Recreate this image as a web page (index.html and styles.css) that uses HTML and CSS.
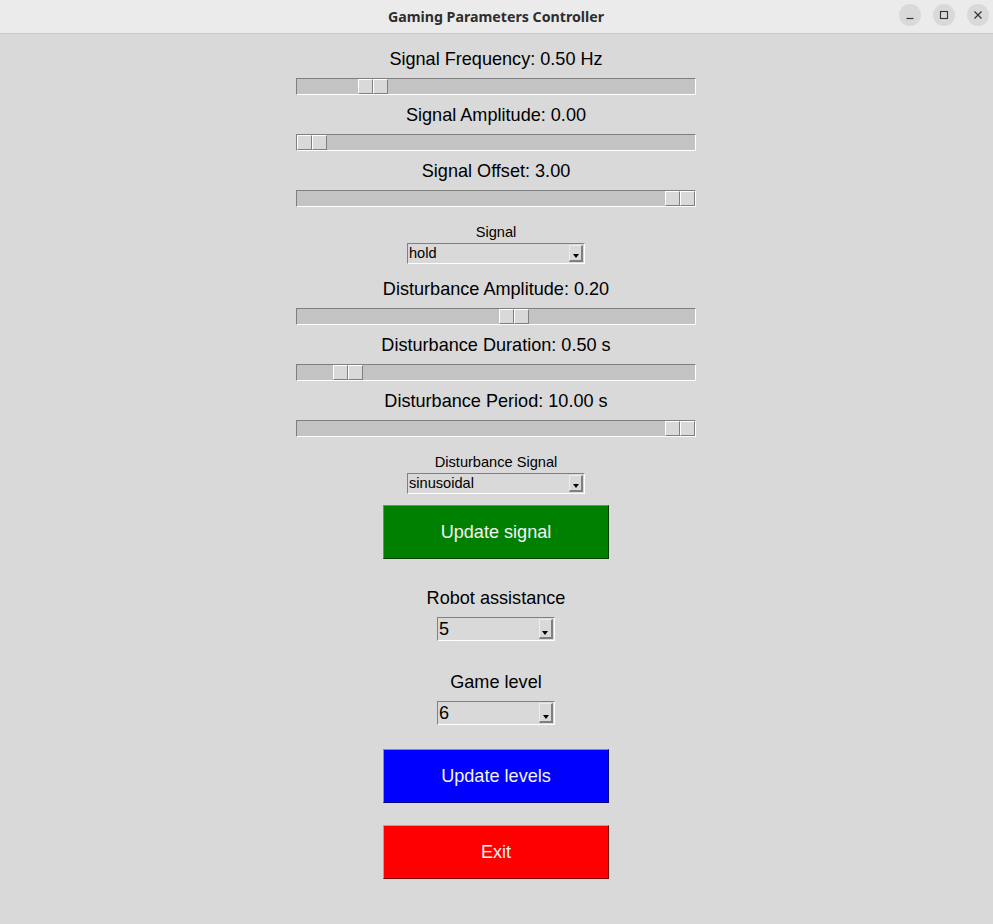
FILE: index.html
```html
<!DOCTYPE html>
<html>
<head>
<meta charset="utf-8">
<title>Gaming Parameters Controller</title>
<link rel="stylesheet" href="styles.css">
</head>
<body>
<div class="window">
  <header class="titlebar">
    <div class="title">Gaming Parameters Controller</div>
    <div class="controls">
      <span class="ctl"><svg width="10" height="10" viewBox="0 0 10 10"><path d="M1.5 8.5h7" stroke="#333" stroke-width="1.2"/></svg></span>
      <span class="ctl"><svg width="10" height="10" viewBox="0 0 10 10"><rect x="1.5" y="1.5" width="7" height="7" fill="none" stroke="#333" stroke-width="1.1"/></svg></span>
      <span class="ctl"><svg width="10" height="10" viewBox="0 0 10 10"><path d="M1.5 1.5l7 7M8.5 1.5l-7 7" stroke="#333" stroke-width="1.2"/></svg></span>
    </div>
  </header>
  <main class="content">
    <div class="scale-block">
      <div class="big-label">Signal Frequency: 0.50 Hz</div>
      <div class="scale"><div class="handle" style="margin-left:61px"><span></span><span></span></div></div>
    </div>
    <div class="scale-block">
      <div class="big-label">Signal Amplitude: 0.00</div>
      <div class="scale"><div class="handle" style="margin-left:0px"><span></span><span></span></div></div>
    </div>
    <div class="scale-block">
      <div class="big-label">Signal Offset: 3.00</div>
      <div class="scale"><div class="handle" style="margin-left:368px"><span></span><span></span></div></div>
    </div>
    <div class="combo-block small">
      <div class="small-label">Signal</div>
      <div class="combo small-combo"><span class="val">hold</span><span class="arrow"><i></i></span></div>
    </div>
    <div class="scale-block after-combo">
      <div class="big-label">Disturbance Amplitude: 0.20</div>
      <div class="scale"><div class="handle" style="margin-left:202px"><span></span><span></span></div></div>
    </div>
    <div class="scale-block">
      <div class="big-label">Disturbance Duration: 0.50 s</div>
      <div class="scale"><div class="handle" style="margin-left:36px"><span></span><span></span></div></div>
    </div>
    <div class="scale-block">
      <div class="big-label">Disturbance Period: 10.00 s</div>
      <div class="scale"><div class="handle" style="margin-left:368px"><span></span><span></span></div></div>
    </div>
    <div class="combo-block small">
      <div class="small-label">Disturbance Signal</div>
      <div class="combo small-combo"><span class="val">sinusoidal</span><span class="arrow"><i></i></span></div>
    </div>
    <button class="btn btn-green">Update signal</button>
    <div class="combo-block big first-big">
      <div class="big-label">Robot assistance</div>
      <div class="combo big-combo"><span class="val">5</span><span class="arrow"><i></i></span></div>
    </div>
    <div class="combo-block big second-big">
      <div class="big-label">Game level</div>
      <div class="combo big-combo"><span class="val">6</span><span class="arrow"><i></i></span></div>
    </div>
    <button class="btn btn-blue">Update levels</button>
    <button class="btn btn-red">Exit</button>
  </main>
</div>
</body>
</html>
```

FILE: styles.css
```css
* { box-sizing: border-box; }
html, body {
  margin: 0;
  padding: 0;
  width: 993px;
  height: 924px;
  overflow: hidden;
  background: #d9d9d9;
  font-family: "Liberation Sans", Arial, sans-serif;
  color: #000;
}
.window {
  width: 993px;
  height: 924px;
  display: flex;
  flex-direction: column;
}
.titlebar {
  height: 34px;
  background: #ebebeb;
  border-bottom: 1px solid #c9c9c9;
  position: relative;
  display: flex;
  align-items: center;
  justify-content: center;
  flex: none;
}
.title {
  font-family: "Noto Sans", "DejaVu Sans", sans-serif;
  font-weight: 700;
  font-size: 14.2px;
  color: #2e2e2e;
  margin-top: -1px;
  margin-left: -1px;
}
.controls {
  position: absolute;
  right: 4px;
  top: 4px;
  display: flex;
  gap: 12px;
}
.ctl {
  width: 22px;
  height: 22px;
  border-radius: 50%;
  background: #d9d9d9;
  display: flex;
  align-items: center;
  justify-content: center;
}
.content {
  display: flex;
  flex-direction: column;
  align-items: center;
  padding-top: 14px;
  padding-right: 1px;
}
.scale-block {
  display: flex;
  flex-direction: column;
  align-items: center;
  margin-bottom: 9px;
}
.scale-block.after-combo { margin-top: 14px; }
.big-label {
  font-size: 18.1px;
  line-height: 22px;
  height: 22px;
  white-space: nowrap;
}
.scale {
  margin-top: 8px;
  width: 400px;
  height: 17px;
  background: #c3c3c3;
  border-top: 1px solid #7f7f7f;
  border-left: 1px solid #7f7f7f;
  border-bottom: 1px solid #ffffff;
  border-right: 1px solid #ffffff;
  display: flex;
}
.handle {
  display: flex;
  height: 15px;
}
.handle span {
  width: 15px;
  height: 15px;
  background: #d9d9d9;
  border-top: 1px solid #ffffff;
  border-left: 1px solid #ffffff;
  border-bottom: 1px solid #7f7f7f;
  border-right: 1px solid #7f7f7f;
}
.combo-block {
  display: flex;
  flex-direction: column;
  align-items: center;
}
.combo-block.small { margin-top: 8px; }
.small-label {
  font-size: 14.6px;
  line-height: 16px;
  height: 16px;
  margin-bottom: 3px;
  white-space: nowrap;
}
.combo {
  display: flex;
  align-items: stretch;
  background: #d9d9d9;
  border-top: 1px solid #808080;
  border-left: 1px solid #808080;
  border-bottom: 1px solid #ffffff;
  border-right: 1px solid #ffffff;
  padding: 1px;
}
.small-combo { width: 178px; height: 21px; }
.big-combo { width: 118px; height: 24px; margin-top: 8px; }
.val {
  flex: 1;
  padding-left: 0;
  white-space: nowrap;
}
.small-combo .val { font-size: 14.6px; line-height: 17px; }
.big-combo .val { font-size: 18.1px; line-height: 20px; }
.arrow {
  width: 14px;
  border-left: 1px solid #ececec;
  border-top: 1px solid #ececec;
  border-right: 2px solid #7f7f7f;
  border-bottom: 2px solid #7f7f7f;
  display: flex;
  align-items: flex-end;
  justify-content: center;
  padding-bottom: 2px;
}
.arrow i {
  display: block;
  width: 0;
  height: 0;
  border-left: 3px solid transparent;
  border-right: 3px solid transparent;
  border-top: 4px solid #000;
}
.btn {
  width: 226px;
  height: 54px;
  font-family: "Liberation Sans", Arial, sans-serif;
  font-size: 18.1px;
  color: #f4f4f4;
  padding: 0;
  margin: 0;
  border-style: solid;
  border-width: 1px;
  flex: none;
}
.btn-green {
  margin-top: 11px;
  background: #008000;
  border-color: #4da64d #003f00 #003f00 #4da64d;
}
.first-big { margin-top: 28px; }
.second-big { margin-top: 30px; }
.btn-blue {
  margin-top: 24px;
  background: #0000ff;
  border-color: #8080ff #00007f #00007f #8080ff;
}
.btn-red {
  margin-top: 22px;
  background: #ff0000;
  border-color: #ff8080 #7f0000 #7f0000 #ff8080;
}
```
